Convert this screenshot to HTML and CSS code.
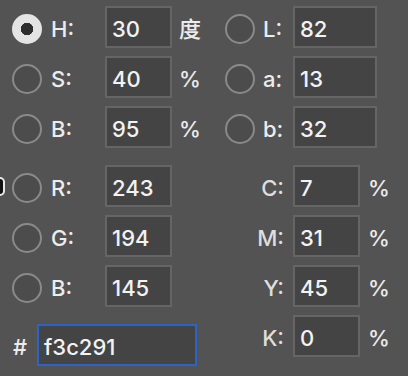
FILE: index.html
```html
<!DOCTYPE html>
<html>
	<head>
		<meta charset="utf-8">
		<title>拾色器</title>
		<link rel="stylesheet" href="styles.css">
	</head>
	<body>
		<div class="picker">
			<span class="edge"></span>
			<div class="col left">
				<div class="row"><span class="radio on"></span><span class="lab">H:</span><span class="field">30</span><span class="unit cjk">度</span></div>
				<div class="row"><span class="radio"></span><span class="lab">S:</span><span class="field">40</span><span class="unit">%</span></div>
				<div class="row"><span class="radio"></span><span class="lab">B:</span><span class="field">95</span><span class="unit">%</span></div>
				<div class="row sep"><span class="radio"></span><span class="lab">R:</span><span class="field">243</span></div>
				<div class="row"><span class="radio"></span><span class="lab">G:</span><span class="field">194</span></div>
				<div class="row"><span class="radio"></span><span class="lab">B:</span><span class="field">145</span></div>
				<div class="row hexrow"><span class="hash">#</span><span class="field hex">f3c291</span></div>
			</div>
			<div class="col right">
				<div class="row"><span class="radio"></span><span class="lab">L:</span><span class="field wide">82</span></div>
				<div class="row"><span class="radio"></span><span class="lab">a:</span><span class="field wide">13</span></div>
				<div class="row"><span class="radio"></span><span class="lab">b:</span><span class="field wide">32</span></div>
				<div class="row sep"><span class="lab cmyk">C:</span><span class="field">7</span><span class="unit">%</span></div>
				<div class="row"><span class="lab cmyk">M:</span><span class="field">31</span><span class="unit">%</span></div>
				<div class="row"><span class="lab cmyk">Y:</span><span class="field">45</span><span class="unit">%</span></div>
				<div class="row"><span class="lab cmyk">K:</span><span class="field">0</span><span class="unit">%</span></div>
			</div>
		</div>
	</body>
</html>
```

FILE: styles.css
```css
*{margin:0;padding:0;box-sizing:border-box}
body{
	background:#535353;
	font-family:Inter,"Noto Sans","Noto Sans CJK SC",sans-serif;
	font-size:22px;
	font-weight:500;
	color:#ececec;
}
.picker{
	display:flex;
	padding-top:6px;
	position:relative;
	height:376px;
}
.edge{
	position:absolute;
	left:-10px;
	top:177px;
	width:15px;
	height:19px;
	background:#111;
	border:2px solid #e8e8e8;
	border-radius:5px;
}
.col{display:flex;flex-direction:column;gap:8px}
.left{width:225px;padding-left:12px}
.row{
	display:flex;
	align-items:center;
	height:42px;
}
.row.sep{margin-top:9px}
.radio{
	width:30px;
	height:30px;
	border-radius:50%;
	border:2px solid #8a8a8a;
	background:#4c4c4c;
	flex-shrink:0;
	margin-top:4px;
}
.radio.on{
	border:none;
	background:radial-gradient(circle,#2e2e2e 0 6px,#e4e4e4 6.5px);
}
.lab{padding-top:4px}
.left .lab{margin-left:9px;width:54px}
.right .lab{margin-left:8px;width:30px}
.right .lab.cmyk{margin-left:0;width:68px;text-align:right;padding-right:9px;color:#dedede}
.field{
	width:67px;
	height:42px;
	background:#444;
	border:2px solid #656565;
	padding:4px 0 0 5px;
	display:flex;
	align-items:center;
	color:#f2f2f2;
}
.field.wide{width:84px}
.unit{margin-left:7px;padding-top:4px}
.right .unit{margin-left:8px}
.cjk{font-family:"Noto Sans CJK SC",sans-serif;padding-top:0}
.hexrow{margin-top:9px}
.hash{width:24px;padding-top:4px;margin-left:1px}
.field.hex{
	width:160px;
	border-color:#2d62c8;
}
```
